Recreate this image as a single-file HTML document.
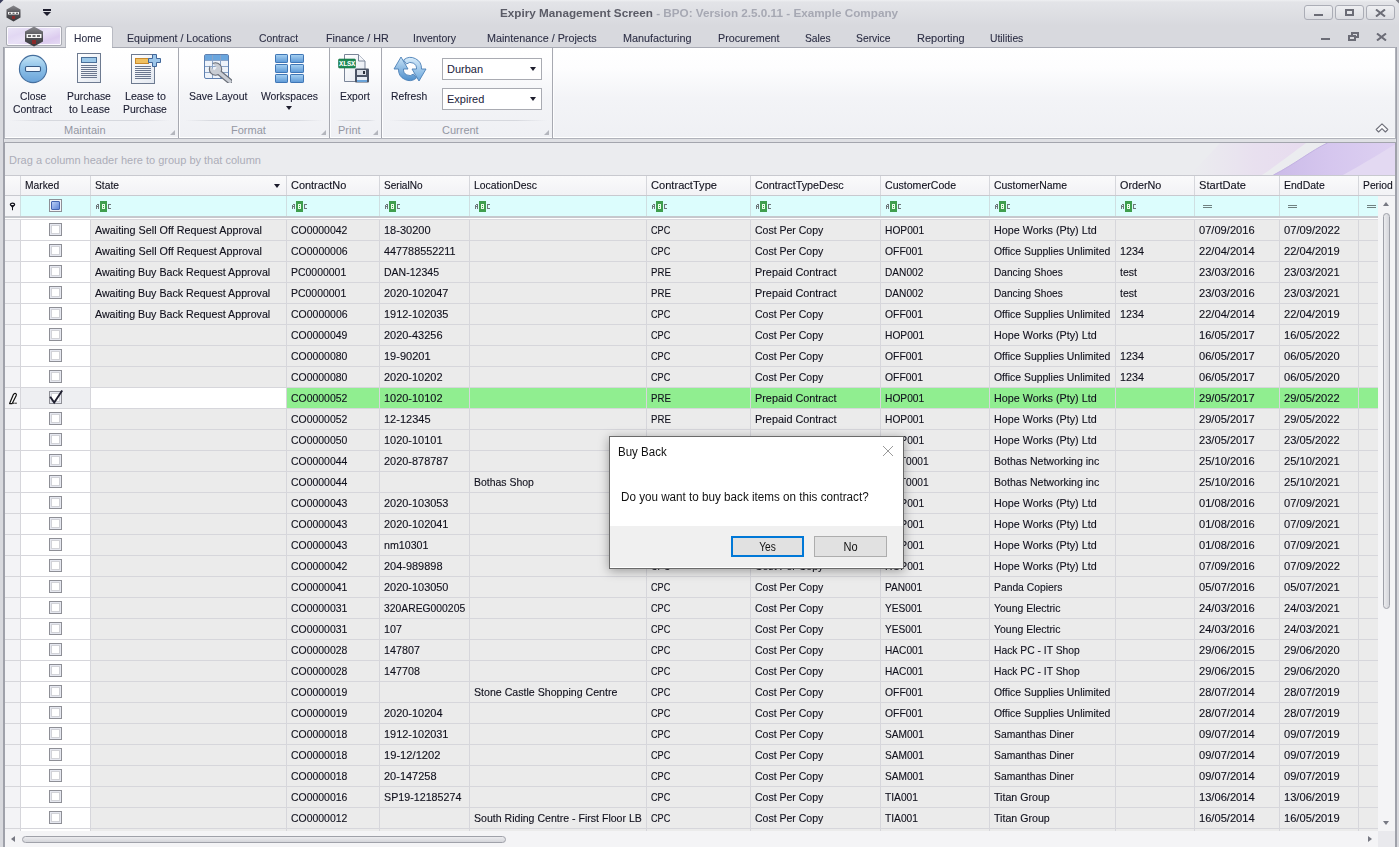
<!DOCTYPE html><html><head><meta charset="utf-8"><style>*{margin:0;padding:0;box-sizing:border-box}
html,body{width:1399px;height:847px;overflow:hidden}
body{position:relative;background:#d9dade;font-family:"Liberation Sans",sans-serif;font-size:11px;color:#1b1b2b}
div,svg{position:absolute;transform-origin:0 0}
.t{font:11px/13px "Liberation Sans",sans-serif;white-space:nowrap;color:#10101c;-webkit-text-stroke:0.12px #10101c}
.tab{font:11px/13px "Liberation Sans",sans-serif;white-space:nowrap;color:#2d2f45;-webkit-text-stroke:0.1px #2d2f45}
.rb{font:11px/13px "Liberation Sans",sans-serif;white-space:nowrap;color:#1a1c30;-webkit-text-stroke:0.1px #1a1c30}
.gl{font:11px/13px "Liberation Sans",sans-serif;white-space:nowrap;color:#9497a3}
.hdr{background:linear-gradient(#fafafb,#f2f2f5);border-top:1px solid #c8c9cf;border-bottom:1px solid #c8c9cf}
.vl{width:1px;background:#d6d7dc}
.vlf{width:1px;background:#cfdfe2}
.vlg{width:1px;background:#d6d6db}
.hl{height:1px;background:#d6d6db}
.flt{background:#dcfdfd}
.cb{width:13px;height:13px;border:1px solid #8e8f96;background:#fff;box-shadow:inset 0 0 0 1px #e6e8f0,inset 0 0 0 2px #d2d3d8}
.cbf{width:13px;height:13px;border:1px solid #8e8f96;background:#f3f4f8}
.cbf i{position:absolute;left:1px;top:1px;width:9px;height:9px;border:1px solid #4564b0;background:linear-gradient(135deg,#b9cdf5,#6186d8);border-radius:1px}
.abc{width:16px;height:11px}
.abc b{position:absolute;top:3px;width:3px;height:5px;font:bold 6px/5px "Liberation Mono",monospace;color:#6b7378}
.abc b:first-child{left:0}
.abc b:last-child{left:12px}
.abc em{position:absolute;left:4px;top:0;width:7px;height:11px;background:#3f9f4f;border-radius:1px;font:bold 6px/11px "Liberation Mono",monospace;color:#e8ffe8;text-align:center;font-style:normal}
.eq{width:9px;height:3px;border-top:1px solid #6f8080;border-bottom:1px solid #6f8080}
.sarrow{width:0;height:0;border-left:3.5px solid transparent;border-right:3.5px solid transparent;border-top:4px solid #1a1a2a}
.hl2{height:1px}
.wb{width:29px;height:15px;border:1px solid #abadb6;border-radius:3px;background:linear-gradient(#eeeff2,#dcdde2)}
.crn{width:0;height:0;border-left:5px solid transparent;border-bottom:5px solid #b4b6bd}
.cmb{width:100px;height:22px;border:1px solid #a9abb2;background:#fff}
.cmb span{position:absolute;left:4px;top:4px;font:11px/13px "Liberation Sans";color:#20223a}
.cmb i{position:absolute;left:87px;top:8px;width:0;height:0;border-left:3.5px solid transparent;border-right:3.5px solid transparent;border-top:4px solid #1e1e2e}
.pencil{width:8px;height:12px}
.chk{}
</style></head><body>
<!-- window frame -->
<div style="left:0;top:0;width:1399px;height:847px;background:linear-gradient(#eeeff2 0px,#e3e4e8 2px,#d8d9de 26px,#d8d9de 100%)"></div>
<div style="left:3px;top:47px;width:2px;height:800px;background:#9fa1aa"></div>
<div style="left:1395px;top:47px;width:2px;height:800px;background:#9fa1aa"></div>
<svg style="left:0;top:0" width="4" height="4"><path d="M0 0 L3.5 0 L0 3.5Z" fill="#3a3d5c"/></svg>
<svg style="left:1395px;top:0" width="4" height="4"><path d="M4 0 L0.5 0 L4 3.5Z" fill="#7c7e86"/></svg>
<!-- title bar -->
<svg style="left:6px;top:5px" width="15" height="17" viewBox="0 0 15 17"><path d="M7.5 0.5 L14.5 4.5 L14.5 12.5 L7.5 16.5 L0.5 12.5 L0.5 4.5Z" fill="url(#hx)"/><rect x="2" y="7" width="11" height="2.5" fill="#f2f2f2"/><rect x="3" y="7.7" width="2" height="1.1" fill="#4a4a4e"/><rect x="6.5" y="7.7" width="2" height="1.1" fill="#4a4a4e"/><rect x="10" y="7.7" width="2" height="1.1" fill="#4a4a4e"/><rect x="6" y="11" width="3" height="3" fill="#8a2a2a"/></svg>
<div style="left:43px;top:9px;width:8px;height:2px;background:#1e1e2e"></div>
<div style="left:43px;top:12px;width:0;height:0;border-left:4px solid transparent;border-right:4px solid transparent;border-top:4px solid #1e1e2e"></div>
<div style="left:500px;top:7px;font:bold 11px/13px 'Liberation Sans';white-space:nowrap;color:#5a5b66;transform:scaleX(1.064)">Expiry Management Screen <span style="color:#a6a8b3">- BPO: Version 2.5.0.11 - Example Company</span></div>
<!-- window buttons -->
<div class="wb" style="left:1304px;top:5px"></div>
<div class="wb" style="left:1335px;top:5px"></div>
<div class="wb" style="left:1366px;top:5px"></div>
<div style="left:1314px;top:14px;width:9px;height:2px;background:#6b6c76"></div>
<div style="left:1345px;top:9px;width:9px;height:7px;border:2px solid #6b6c76;border-width:2px 2px 2px 2px"></div>
<svg style="left:1375px;top:9px" width="11" height="8"><path d="M1 0.5 L10 7.5 M10 0.5 L1 7.5" stroke="#6b6c76" stroke-width="2"/></svg>
<!-- tabs row -->
<div style="left:6px;top:26px;width:56px;height:20px;border:1px solid #a9abb3;border-radius:2px;box-shadow:inset 0 0 0 1px rgba(255,255,255,0.85);background:linear-gradient(160deg,#ebe6f7 0%,#e2d8f3 30%,#e9e1f6 50%,#dccbef 75%,#e6dcf4 100%)"></div>
<svg style="left:24px;top:26px" width="20" height="21" viewBox="0 0 20 21"><defs><linearGradient id="hx" x1="0" y1="0" x2="0" y2="1"><stop offset="0" stop-color="#8a8a8f"/><stop offset="0.5" stop-color="#505055"/><stop offset="1" stop-color="#3a3a3e"/></linearGradient></defs><path d="M10 0.5 L19 5.5 L19 15.5 L10 20.5 L1 15.5 L1 5.5Z" fill="url(#hx)"/><rect x="2.5" y="8" width="15" height="4" fill="#f4f4f4"/><rect x="4" y="9.2" width="3" height="1.6" fill="#4a4a4e"/><rect x="8.5" y="9.2" width="3" height="1.6" fill="#4a4a4e"/><rect x="13" y="9.2" width="3" height="1.6" fill="#4a4a4e"/><rect x="8" y="14" width="4" height="4" fill="#8a2a2a"/></svg>
<div style="left:65px;top:26px;width:48px;height:23px;background:#fff;border:1px solid #b9bbc3;border-bottom:none;border-radius:3px 3px 0 0"></div>
<!-- mdi buttons -->
<div style="left:1321px;top:38px;width:9px;height:2px;background:#6b6c76"></div>
<div style="left:1351px;top:32px;width:8px;height:6px;border:2px solid #6b6c76"></div>
<div style="left:1348px;top:35px;width:8px;height:6px;border:2px solid #6b6c76;background:#d9dade"></div>
<svg style="left:1376px;top:33px" width="11" height="8"><path d="M1 0.5 L10 7.5 M10 0.5 L1 7.5" stroke="#6b6c76" stroke-width="2"/></svg>
<!-- ribbon panel -->
<div style="left:4px;top:47px;width:1392px;height:92px;border:1px solid #b0b2ba;border-top-color:#a9abb4;box-shadow:inset 0 -1px 0 #fff;background:linear-gradient(#ffffff 0px,#fdfdfe 20px,#f3f4f7 50px,#eff0f4 90px)"></div>
<div style="left:66px;top:47px;width:46px;height:1px;background:#fff"></div>
<div style="left:178px;top:48px;width:1px;height:90px;background:#a7a9b1"></div>
<div style="left:179px;top:48px;width:1px;height:90px;background:#fdfdfe"></div>
<div style="left:329px;top:48px;width:1px;height:90px;background:#a7a9b1"></div>
<div style="left:330px;top:48px;width:1px;height:90px;background:#fdfdfe"></div>
<div style="left:381px;top:48px;width:1px;height:90px;background:#a7a9b1"></div>
<div style="left:382px;top:48px;width:1px;height:90px;background:#fdfdfe"></div>
<div style="left:552px;top:48px;width:1px;height:90px;background:#a7a9b1"></div>
<div style="left:553px;top:48px;width:1px;height:90px;background:#fdfdfe"></div>
<div style="left:10px;top:120px;width:160px;height:1px;background:linear-gradient(90deg,rgba(210,212,218,0),#d6d8de 20%,#d6d8de 80%,rgba(210,212,218,0))"></div>
<div style="left:185px;top:120px;width:138px;height:1px;background:linear-gradient(90deg,rgba(210,212,218,0),#d6d8de 20%,#d6d8de 80%,rgba(210,212,218,0))"></div>
<div style="left:336px;top:120px;width:40px;height:1px;background:linear-gradient(90deg,rgba(210,212,218,0),#d6d8de 20%,#d6d8de 80%,rgba(210,212,218,0))"></div>
<div style="left:389px;top:120px;width:158px;height:1px;background:linear-gradient(90deg,rgba(210,212,218,0),#d6d8de 20%,#d6d8de 80%,rgba(210,212,218,0))"></div>
<div class="gl" style="left:64px;top:124px">Maintain</div>
<div class="gl" style="left:231px;top:124px">Format</div>
<div class="gl" style="left:338px;top:124px">Print</div>
<div class="gl" style="left:442px;top:124px">Current</div>
<div class="crn" style="left:170px;top:130px"></div>
<div class="crn" style="left:321px;top:130px"></div>
<div class="crn" style="left:373px;top:130px"></div>
<div class="crn" style="left:544px;top:130px"></div>
<!-- ribbon buttons text -->
<div style="left:286px;top:106px;width:0;height:0;border-left:3.5px solid transparent;border-right:3.5px solid transparent;border-top:4px solid #1e1e2e"></div>
<!-- combos -->
<div class="cmb" style="left:442px;top:58px"><span>Durban</span><i></i></div>
<div class="cmb" style="left:442px;top:88px"><span>Expired</span><i></i></div>
<!-- icons -->
<svg style="left:17px;top:53px" width="32" height="32" viewBox="0 0 32 32">
<defs><linearGradient id="gc" x1="0" y1="0" x2="0" y2="1"><stop offset="0" stop-color="#c6e6f7"/><stop offset="0.45" stop-color="#8fc2e8"/><stop offset="1" stop-color="#6aa3d9"/></linearGradient></defs>
<circle cx="16" cy="16" r="13.6" fill="url(#gc)" stroke="#456f9e" stroke-width="1.1"/>
<rect x="8.5" y="13.5" width="15" height="5" rx="1.2" fill="#f4f8fd" stroke="#375a85" stroke-width="1.1"/>
</svg>
<svg style="left:76px;top:52px" width="26" height="32" viewBox="0 0 26 32">
<defs><linearGradient id="gd" x1="0" y1="0" x2="1" y2="1"><stop offset="0" stop-color="#ffffff"/><stop offset="1" stop-color="#e3e8f0"/></linearGradient></defs>
<rect x="1.5" y="1.5" width="23" height="29" fill="url(#gd)" stroke="#6d7a90" stroke-width="1"/>
<rect x="5.5" y="5.5" width="15" height="5" fill="#9cc8e8" stroke="#4a6f98" stroke-width="1"/>
<path d="M5 13.5h16M5 15.5h16M5 17.5h16M5 19.5h16M5 21.5h16M5 23.5h16M5 25.5h16" stroke="#6a768e" stroke-width="1"/>
</svg>
<svg style="left:130px;top:53px" width="32" height="32" viewBox="0 0 32 32">
<rect x="1.5" y="1.5" width="23" height="29" fill="url(#gd)" stroke="#6d7a90" stroke-width="1"/>
<rect x="5.5" y="5.5" width="13" height="5" fill="#f0c060" stroke="#c98a2c" stroke-width="1"/>
<path d="M5 13.5h16M5 15.5h16M5 17.5h16M5 19.5h16M5 21.5h16M5 23.5h16M5 25.5h16" stroke="#6a768e" stroke-width="1"/>
<path d="M22.5 1.5h4v4h4v4h-4v4h-4v-4h-4v-4h4z" fill="#9cc6ea" stroke="#41679a" stroke-width="1"/>
</svg>
<svg style="left:203px;top:53px" width="32" height="32" viewBox="0 0 32 32">
<rect x="1.5" y="1.5" width="24" height="24" rx="1.5" fill="#eef3fa" stroke="#5f80b0" stroke-width="1"/>
<rect x="2" y="2" width="23" height="5" fill="#6aa6de"/>
<path d="M2 7.5h23M2 13.5h23M2 19.5h23M9.5 2v23M17.5 2v23" stroke="#8aa4c8" stroke-width="1"/>
<mask id="wm"><rect x="0" y="0" width="32" height="32" fill="#fff"/><rect x="10.7" y="6" width="3.6" height="10" fill="#000" transform="rotate(-45 12.5 16)"/></mask>
<g mask="url(#wm)">
<path d="M13 17 L27 28.5" stroke="#6a6f79" stroke-width="5.6" stroke-linecap="round"/>
<circle cx="12.5" cy="16" r="6.2" fill="#c9cdd4" stroke="#6a6f79" stroke-width="1.1"/>
<path d="M13 17 L27 28.5" stroke="#c9cdd4" stroke-width="3.4" stroke-linecap="round"/>
</g>
</svg>
<svg style="left:274px;top:53px" width="32" height="32" viewBox="0 0 32 32">
<defs><linearGradient id="gw" x1="0" y1="0" x2="0" y2="1"><stop offset="0" stop-color="#a9d2f2"/><stop offset="1" stop-color="#5c98d6"/></linearGradient></defs>
<g fill="url(#gw)" stroke="#3f76b6" stroke-width="1">
<rect x="1.5" y="1.5" width="12" height="8" rx="0.6"/><rect x="16.5" y="1.5" width="13" height="8" rx="0.6"/>
<rect x="1.5" y="11.5" width="12" height="8" rx="0.6"/><rect x="16.5" y="11.5" width="13" height="8" rx="0.6"/>
<rect x="1.5" y="21.5" width="12" height="8" rx="0.6"/><rect x="16.5" y="21.5" width="13" height="8" rx="0.6"/>
</g></svg>
<svg style="left:337px;top:52px" width="34" height="32" viewBox="0 0 34 32">
<path d="M7.5 2.5h14l6.5 6.5v20.5h-20.5z" fill="url(#gd)" stroke="#7a8598" stroke-width="1"/>
<path d="M21.5 2.5v6.5h6.5" fill="#f4f6f9" stroke="#7a8598" stroke-width="1"/>
<rect x="1.5" y="7" width="17" height="9" rx="1" fill="#1f8a55" stroke="#157044" stroke-width="0.6"/>
<text x="10" y="14.2" font-family="Liberation Mono" font-weight="bold" font-size="7.2" fill="#ffffff" text-anchor="middle" letter-spacing="-0.3">XLSX</text>
<rect x="18" y="16.5" width="14" height="14" rx="1" fill="#4b5466"/>
<rect x="20" y="18" width="9" height="5" fill="#d9dee6"/>
<rect x="26" y="19" width="2" height="3" fill="#2a303c"/>
<rect x="20" y="25" width="10" height="5" fill="#e7edf5"/>
<rect x="20" y="28" width="10" height="2" fill="#6aa3d8"/>
</svg>
<svg style="left:392px;top:55px" width="36" height="28" viewBox="0 0 36 28">
<defs><linearGradient id="gr" x1="0" y1="0" x2="0" y2="1"><stop offset="0" stop-color="#c9e4f7"/><stop offset="1" stop-color="#4f8fcc"/></linearGradient>
<linearGradient id="gr2" x1="0" y1="0" x2="0" y2="1"><stop offset="0" stop-color="#d8ecfa"/><stop offset="1" stop-color="#6aa6dc"/></linearGradient></defs>
<path d="M9 2 L2 14 h4.5 a11 11 0 0 0 18 9 l-3 -4 a6 6 0 0 1 -10 -5 h4.5z" fill="url(#gr)" stroke="#4b7fb5" stroke-width="0.9"/>
<path d="M27 26 L34 14 h-4.5 a11 11 0 0 0 -18 -9 l3 4 a6 6 0 0 1 10 5 h-4.5z" fill="url(#gr2)" stroke="#4b7fb5" stroke-width="0.9"/>
</svg>


<svg style="left:1375px;top:123px" width="15" height="11" viewBox="0 0 15 11"><path d="M1.2 6.5 L7 0.8 L12.8 6.5 L10.4 9 L7 5.7 L3.6 9Z" fill="#fbfbfd" stroke="#6f707a" stroke-width="1.1" stroke-linejoin="round"/></svg>
<!-- band + group panel -->
<div style="left:4px;top:139px;width:1392px;height:3px;background:#dfe0e4"></div>
<div style="left:4px;top:142px;width:1392px;height:1px;background:#a3a5ad"></div>
<div style="left:5px;top:143px;width:1390px;height:32px;background:#ebecef"></div>

<svg style="left:1150px;top:143px" width="245" height="32" viewBox="0 0 245 32">
<defs>
<linearGradient id="pk" x1="0" y1="0" x2="1" y2="0"><stop offset="0" stop-color="#e7dcef" stop-opacity="0"/><stop offset="0.55" stop-color="#e6d6ef" stop-opacity="0.9"/><stop offset="1" stop-color="#e4d0ee"/></linearGradient>
<linearGradient id="pu" x1="0" y1="0" x2="1" y2="0"><stop offset="0" stop-color="#cbbbe8"/><stop offset="0.45" stop-color="#d5c6ee"/><stop offset="1" stop-color="#ddd0f1"/></linearGradient>
</defs>
<path d="M40 32 L112 32 C130 20 145 8 156 0 L70 0Z" fill="url(#pk)" opacity="0.6"/>
<path d="M123 32 C145 21 162 7 177 0 L245 0 L245 32Z" fill="url(#pu)"/>
<path d="M123.5 32 C145 21 162 7 177.5 0" fill="none" stroke="#c3b2e2" stroke-width="1"/>
<path d="M193 32 C215 20 232 9 244 2 L245 2 L245 32Z" fill="#e3d9f2"/>
</svg>
<div style="left:9px;top:154px;font:11px/13px 'Liberation Sans';color:#abadb8;white-space:nowrap">Drag a column header here to group by that column</div>

<div class="tab" style="left:74px;top:32px;transform:scaleX(0.935);">Home</div>
<div class="tab" style="left:127px;top:32px;transform:scaleX(0.960);">Equipment / Locations</div>
<div class="tab" style="left:259px;top:32px;transform:scaleX(0.941);">Contract</div>
<div class="tab" style="left:326px;top:32px;transform:scaleX(0.976);">Finance / HR</div>
<div class="tab" style="left:413px;top:32px;transform:scaleX(0.951);">Inventory</div>
<div class="tab" style="left:487px;top:32px;transform:scaleX(0.979);">Maintenance / Projects</div>
<div class="tab" style="left:623px;top:32px;transform:scaleX(0.983);">Manufacturing</div>
<div class="tab" style="left:718px;top:32px;transform:scaleX(0.978);">Procurement</div>
<div class="tab" style="left:805px;top:32px;transform:scaleX(0.935);">Sales</div>
<div class="tab" style="left:856px;top:32px;transform:scaleX(0.940);">Service</div>
<div class="tab" style="left:917px;top:32px;transform:scaleX(0.998);">Reporting</div>
<div class="tab" style="left:990px;top:32px;transform:scaleX(0.939);">Utilities</div>
<div class="rb" style="left:19.9px;top:90px;transform:scaleX(0.934)">Close</div>
<div class="rb" style="left:13.4px;top:103px;transform:scaleX(0.941)">Contract</div>
<div class="rb" style="left:67.1px;top:90px;transform:scaleX(0.944)">Purchase</div>
<div class="rb" style="left:68.6px;top:103px;transform:scaleX(0.969)">to Lease</div>
<div class="rb" style="left:124.6px;top:90px;transform:scaleX(0.969)">Lease to</div>
<div class="rb" style="left:123.1px;top:103px;transform:scaleX(0.944)">Purchase</div>
<div class="rb" style="left:188.8px;top:90px;transform:scaleX(0.955)">Save Layout</div>
<div class="rb" style="left:261.0px;top:90px;transform:scaleX(0.943)">Workspaces</div>
<div class="rb" style="left:340.1px;top:90px;transform:scaleX(0.938)">Export</div>
<div class="rb" style="left:391.4px;top:90px;transform:scaleX(0.940)">Refresh</div>
<div class="hdr" style="left:5px;top:175px;width:1390px;height:21px"></div>
<div class="vl" style="left:20px;top:176px;height:19px"></div>
<div class="t" style="left:25px;top:179px;transform:scaleX(0.933);">Marked</div>
<div class="vl" style="left:90px;top:176px;height:19px"></div>
<div class="t" style="left:95px;top:179px;transform:scaleX(0.934);">State</div>
<div class="vl" style="left:286px;top:176px;height:19px"></div>
<div class="t" style="left:291px;top:179px;transform:scaleX(0.993);">ContractNo</div>
<div class="vl" style="left:379px;top:176px;height:19px"></div>
<div class="t" style="left:384px;top:179px;transform:scaleX(0.913);">SerialNo</div>
<div class="vl" style="left:469px;top:176px;height:19px"></div>
<div class="t" style="left:474px;top:179px;transform:scaleX(0.944);">LocationDesc</div>
<div class="vl" style="left:646px;top:176px;height:19px"></div>
<div class="t" style="left:651px;top:179px;transform:scaleX(1.009);">ContractType</div>
<div class="vl" style="left:750px;top:176px;height:19px"></div>
<div class="t" style="left:755px;top:179px;transform:scaleX(0.980);">ContractTypeDesc</div>
<div class="vl" style="left:880px;top:176px;height:19px"></div>
<div class="t" style="left:885px;top:179px;transform:scaleX(0.960);">CustomerCode</div>
<div class="vl" style="left:989px;top:176px;height:19px"></div>
<div class="t" style="left:994px;top:179px;transform:scaleX(0.947);">CustomerName</div>
<div class="vl" style="left:1115px;top:176px;height:19px"></div>
<div class="t" style="left:1120px;top:179px;transform:scaleX(0.980);">OrderNo</div>
<div class="vl" style="left:1194px;top:176px;height:19px"></div>
<div class="t" style="left:1199px;top:179px;transform:scaleX(1.010);">StartDate</div>
<div class="vl" style="left:1279px;top:176px;height:19px"></div>
<div class="t" style="left:1284px;top:179px;transform:scaleX(0.953);">EndDate</div>
<div class="vl" style="left:1358px;top:176px;height:19px"></div>
<div class="t" style="left:1363px;top:179px;transform:scaleX(0.938);">Period</div>
<div class="sarrow" style="left:274px;top:184px"></div>
<div style="left:5px;top:196px;width:15px;height:20px;background:#f3f4f7"></div>
<div class="flt" style="left:21px;top:196px;width:1357px;height:20px"></div>
<svg style="left:9px;top:202px" width="7" height="9" viewBox="0 0 7 9"><ellipse cx="3.5" cy="2.5" rx="2.1" ry="1.3" fill="#fff" stroke="#10101a" stroke-width="1.3"/><path d="M1.6 3.6 L5.4 3.6 L4 5.5 L4 8.2 L3 8.2 L3 5.5Z" fill="#10101a"/></svg>
<div class="vlf" style="left:20px;top:196px;height:20px"></div>
<div class="vlf" style="left:90px;top:196px;height:20px"></div>
<div class="vlf" style="left:286px;top:196px;height:20px"></div>
<div class="vlf" style="left:379px;top:196px;height:20px"></div>
<div class="vlf" style="left:469px;top:196px;height:20px"></div>
<div class="vlf" style="left:646px;top:196px;height:20px"></div>
<div class="vlf" style="left:750px;top:196px;height:20px"></div>
<div class="vlf" style="left:880px;top:196px;height:20px"></div>
<div class="vlf" style="left:989px;top:196px;height:20px"></div>
<div class="vlf" style="left:1115px;top:196px;height:20px"></div>
<div class="vlf" style="left:1194px;top:196px;height:20px"></div>
<div class="vlf" style="left:1279px;top:196px;height:20px"></div>
<div class="vlf" style="left:1358px;top:196px;height:20px"></div>
<div class="cbf" style="left:49px;top:199px"><i></i></div>
<svg style="left:96px;top:201px" width="15" height="11" shape-rendering="crispEdges"><g fill="#6d7579"><rect x="0" y="4" width="1" height="4"/><rect x="2" y="4" width="1" height="4"/><rect x="0.5" y="3" width="2" height="1"/><rect x="1" y="5" width="1" height="1"/><rect x="12" y="3" width="3" height="1"/><rect x="12" y="7" width="3" height="1"/><rect x="12" y="4" width="1" height="3"/></g><rect x="4" y="0" width="7" height="11" rx="1" fill="#3f9e4e"/><rect x="6" y="3" width="3" height="5" fill="#e9fbe9"/><rect x="7" y="4" width="1" height="1" fill="#3f9e4e"/><rect x="7" y="6" width="1" height="1" fill="#3f9e4e"/></svg>
<svg style="left:292px;top:201px" width="15" height="11" shape-rendering="crispEdges"><g fill="#6d7579"><rect x="0" y="4" width="1" height="4"/><rect x="2" y="4" width="1" height="4"/><rect x="0.5" y="3" width="2" height="1"/><rect x="1" y="5" width="1" height="1"/><rect x="12" y="3" width="3" height="1"/><rect x="12" y="7" width="3" height="1"/><rect x="12" y="4" width="1" height="3"/></g><rect x="4" y="0" width="7" height="11" rx="1" fill="#3f9e4e"/><rect x="6" y="3" width="3" height="5" fill="#e9fbe9"/><rect x="7" y="4" width="1" height="1" fill="#3f9e4e"/><rect x="7" y="6" width="1" height="1" fill="#3f9e4e"/></svg>
<svg style="left:385px;top:201px" width="15" height="11" shape-rendering="crispEdges"><g fill="#6d7579"><rect x="0" y="4" width="1" height="4"/><rect x="2" y="4" width="1" height="4"/><rect x="0.5" y="3" width="2" height="1"/><rect x="1" y="5" width="1" height="1"/><rect x="12" y="3" width="3" height="1"/><rect x="12" y="7" width="3" height="1"/><rect x="12" y="4" width="1" height="3"/></g><rect x="4" y="0" width="7" height="11" rx="1" fill="#3f9e4e"/><rect x="6" y="3" width="3" height="5" fill="#e9fbe9"/><rect x="7" y="4" width="1" height="1" fill="#3f9e4e"/><rect x="7" y="6" width="1" height="1" fill="#3f9e4e"/></svg>
<svg style="left:475px;top:201px" width="15" height="11" shape-rendering="crispEdges"><g fill="#6d7579"><rect x="0" y="4" width="1" height="4"/><rect x="2" y="4" width="1" height="4"/><rect x="0.5" y="3" width="2" height="1"/><rect x="1" y="5" width="1" height="1"/><rect x="12" y="3" width="3" height="1"/><rect x="12" y="7" width="3" height="1"/><rect x="12" y="4" width="1" height="3"/></g><rect x="4" y="0" width="7" height="11" rx="1" fill="#3f9e4e"/><rect x="6" y="3" width="3" height="5" fill="#e9fbe9"/><rect x="7" y="4" width="1" height="1" fill="#3f9e4e"/><rect x="7" y="6" width="1" height="1" fill="#3f9e4e"/></svg>
<svg style="left:652px;top:201px" width="15" height="11" shape-rendering="crispEdges"><g fill="#6d7579"><rect x="0" y="4" width="1" height="4"/><rect x="2" y="4" width="1" height="4"/><rect x="0.5" y="3" width="2" height="1"/><rect x="1" y="5" width="1" height="1"/><rect x="12" y="3" width="3" height="1"/><rect x="12" y="7" width="3" height="1"/><rect x="12" y="4" width="1" height="3"/></g><rect x="4" y="0" width="7" height="11" rx="1" fill="#3f9e4e"/><rect x="6" y="3" width="3" height="5" fill="#e9fbe9"/><rect x="7" y="4" width="1" height="1" fill="#3f9e4e"/><rect x="7" y="6" width="1" height="1" fill="#3f9e4e"/></svg>
<svg style="left:756px;top:201px" width="15" height="11" shape-rendering="crispEdges"><g fill="#6d7579"><rect x="0" y="4" width="1" height="4"/><rect x="2" y="4" width="1" height="4"/><rect x="0.5" y="3" width="2" height="1"/><rect x="1" y="5" width="1" height="1"/><rect x="12" y="3" width="3" height="1"/><rect x="12" y="7" width="3" height="1"/><rect x="12" y="4" width="1" height="3"/></g><rect x="4" y="0" width="7" height="11" rx="1" fill="#3f9e4e"/><rect x="6" y="3" width="3" height="5" fill="#e9fbe9"/><rect x="7" y="4" width="1" height="1" fill="#3f9e4e"/><rect x="7" y="6" width="1" height="1" fill="#3f9e4e"/></svg>
<svg style="left:886px;top:201px" width="15" height="11" shape-rendering="crispEdges"><g fill="#6d7579"><rect x="0" y="4" width="1" height="4"/><rect x="2" y="4" width="1" height="4"/><rect x="0.5" y="3" width="2" height="1"/><rect x="1" y="5" width="1" height="1"/><rect x="12" y="3" width="3" height="1"/><rect x="12" y="7" width="3" height="1"/><rect x="12" y="4" width="1" height="3"/></g><rect x="4" y="0" width="7" height="11" rx="1" fill="#3f9e4e"/><rect x="6" y="3" width="3" height="5" fill="#e9fbe9"/><rect x="7" y="4" width="1" height="1" fill="#3f9e4e"/><rect x="7" y="6" width="1" height="1" fill="#3f9e4e"/></svg>
<svg style="left:995px;top:201px" width="15" height="11" shape-rendering="crispEdges"><g fill="#6d7579"><rect x="0" y="4" width="1" height="4"/><rect x="2" y="4" width="1" height="4"/><rect x="0.5" y="3" width="2" height="1"/><rect x="1" y="5" width="1" height="1"/><rect x="12" y="3" width="3" height="1"/><rect x="12" y="7" width="3" height="1"/><rect x="12" y="4" width="1" height="3"/></g><rect x="4" y="0" width="7" height="11" rx="1" fill="#3f9e4e"/><rect x="6" y="3" width="3" height="5" fill="#e9fbe9"/><rect x="7" y="4" width="1" height="1" fill="#3f9e4e"/><rect x="7" y="6" width="1" height="1" fill="#3f9e4e"/></svg>
<svg style="left:1121px;top:201px" width="15" height="11" shape-rendering="crispEdges"><g fill="#6d7579"><rect x="0" y="4" width="1" height="4"/><rect x="2" y="4" width="1" height="4"/><rect x="0.5" y="3" width="2" height="1"/><rect x="1" y="5" width="1" height="1"/><rect x="12" y="3" width="3" height="1"/><rect x="12" y="7" width="3" height="1"/><rect x="12" y="4" width="1" height="3"/></g><rect x="4" y="0" width="7" height="11" rx="1" fill="#3f9e4e"/><rect x="6" y="3" width="3" height="5" fill="#e9fbe9"/><rect x="7" y="4" width="1" height="1" fill="#3f9e4e"/><rect x="7" y="6" width="1" height="1" fill="#3f9e4e"/></svg>
<div class="eq" style="left:1203px;top:205px"></div>
<div class="eq" style="left:1288px;top:205px"></div>
<div class="eq" style="left:1367px;top:205px"></div>
<div style="position:absolute;left:5px;top:216px;width:1373px;height:2px;background:#c6c8cd"></div>
<div style="position:absolute;left:5px;top:218px;width:1373px;height:1px;background:#fff"></div>
<div style="position:absolute;left:5px;top:219px;width:1373px;height:1px;background:#d9d9de"></div>
<div style="position:absolute;left:5px;top:220px;width:15px;height:611px;background:#f3f3f6"></div>
<div style="position:absolute;left:21px;top:220px;width:69px;height:611px;background:#fff"></div>
<div style="position:absolute;left:91px;top:220px;width:1287px;height:611px;background:#ebebeb"></div>
<div class="cb" style="left:49px;top:223px"></div>
<div class="hl" style="left:5px;top:240px;width:1373px"></div>
<div class="t" style="left:95px;top:224px;transform:scaleX(0.980);width:194.8px;overflow:hidden;">Awaiting Sell Off Request Approval</div>
<div class="t" style="left:291px;top:224px;transform:scaleX(0.949);width:92.7px;overflow:hidden;">CO0000042</div>
<div class="t" style="left:384px;top:224px;transform:scaleX(1.001);width:84.9px;overflow:hidden;">18-30200</div>
<div class="t" style="left:651px;top:224px;transform:scaleX(0.829);width:119.4px;overflow:hidden;">CPC</div>
<div class="t" style="left:755px;top:224px;transform:scaleX(0.955);width:130.9px;overflow:hidden;">Cost Per Copy</div>
<div class="t" style="left:885px;top:224px;transform:scaleX(0.929);width:111.9px;overflow:hidden;">HOP001</div>
<div class="t" style="left:994px;top:224px;transform:scaleX(0.978);width:123.7px;overflow:hidden;">Hope Works (Pty) Ltd</div>
<div class="t" style="left:1199px;top:224px;transform:scaleX(1.010);width:79.2px;overflow:hidden;">07/09/2016</div>
<div class="t" style="left:1284px;top:224px;transform:scaleX(1.016);width:72.9px;overflow:hidden;">07/09/2022</div>
<div class="cb" style="left:49px;top:244px"></div>
<div class="hl" style="left:5px;top:261px;width:1373px"></div>
<div class="t" style="left:95px;top:245px;transform:scaleX(0.980);width:194.8px;overflow:hidden;">Awaiting Sell Off Request Approval</div>
<div class="t" style="left:291px;top:245px;transform:scaleX(0.953);width:92.4px;overflow:hidden;">CO0000006</div>
<div class="t" style="left:384px;top:245px;transform:scaleX(0.985);width:86.3px;overflow:hidden;">447788552211</div>
<div class="t" style="left:651px;top:245px;transform:scaleX(0.829);width:119.4px;overflow:hidden;">CPC</div>
<div class="t" style="left:755px;top:245px;transform:scaleX(0.955);width:130.9px;overflow:hidden;">Cost Per Copy</div>
<div class="t" style="left:885px;top:245px;transform:scaleX(0.942);width:110.4px;overflow:hidden;">OFF001</div>
<div class="t" style="left:994px;top:245px;transform:scaleX(0.948);width:127.6px;overflow:hidden;">Office Supplies Unlimited</div>
<div class="t" style="left:1120px;top:245px;transform:scaleX(0.977);width:75.7px;overflow:hidden;">1234</div>
<div class="t" style="left:1199px;top:245px;transform:scaleX(1.011);width:79.1px;overflow:hidden;">22/04/2014</div>
<div class="t" style="left:1284px;top:245px;transform:scaleX(1.011);width:73.2px;overflow:hidden;">22/04/2019</div>
<div class="cb" style="left:49px;top:265px"></div>
<div class="hl" style="left:5px;top:282px;width:1373px"></div>
<div class="t" style="left:95px;top:266px;transform:scaleX(0.969);width:197.0px;overflow:hidden;">Awaiting Buy Back Request Approval</div>
<div class="t" style="left:291px;top:266px;transform:scaleX(0.951);width:92.5px;overflow:hidden;">PC0000001</div>
<div class="t" style="left:384px;top:266px;transform:scaleX(0.957);width:88.8px;overflow:hidden;">DAN-12345</div>
<div class="t" style="left:651px;top:266px;transform:scaleX(0.878);width:112.8px;overflow:hidden;">PRE</div>
<div class="t" style="left:755px;top:266px;transform:scaleX(0.987);width:126.7px;overflow:hidden;">Prepaid Contract</div>
<div class="t" style="left:885px;top:266px;transform:scaleX(0.922);width:112.8px;overflow:hidden;">DAN002</div>
<div class="t" style="left:994px;top:266px;transform:scaleX(0.921);width:131.3px;overflow:hidden;">Dancing Shoes</div>
<div class="t" style="left:1120px;top:266px;transform:scaleX(0.956);width:77.4px;overflow:hidden;">test</div>
<div class="t" style="left:1199px;top:266px;transform:scaleX(1.011);width:79.1px;overflow:hidden;">23/03/2016</div>
<div class="t" style="left:1284px;top:266px;transform:scaleX(1.011);width:73.2px;overflow:hidden;">23/03/2021</div>
<div class="cb" style="left:49px;top:286px"></div>
<div class="hl" style="left:5px;top:303px;width:1373px"></div>
<div class="t" style="left:95px;top:287px;transform:scaleX(0.969);width:197.0px;overflow:hidden;">Awaiting Buy Back Request Approval</div>
<div class="t" style="left:291px;top:287px;transform:scaleX(0.951);width:92.5px;overflow:hidden;">PC0000001</div>
<div class="t" style="left:384px;top:287px;transform:scaleX(0.994);width:85.5px;overflow:hidden;">2020-102047</div>
<div class="t" style="left:651px;top:287px;transform:scaleX(0.878);width:112.8px;overflow:hidden;">PRE</div>
<div class="t" style="left:755px;top:287px;transform:scaleX(0.987);width:126.7px;overflow:hidden;">Prepaid Contract</div>
<div class="t" style="left:885px;top:287px;transform:scaleX(0.922);width:112.8px;overflow:hidden;">DAN002</div>
<div class="t" style="left:994px;top:287px;transform:scaleX(0.921);width:131.3px;overflow:hidden;">Dancing Shoes</div>
<div class="t" style="left:1120px;top:287px;transform:scaleX(0.956);width:77.4px;overflow:hidden;">test</div>
<div class="t" style="left:1199px;top:287px;transform:scaleX(1.011);width:79.1px;overflow:hidden;">23/03/2016</div>
<div class="t" style="left:1284px;top:287px;transform:scaleX(1.011);width:73.2px;overflow:hidden;">23/03/2021</div>
<div class="cb" style="left:49px;top:307px"></div>
<div class="hl" style="left:5px;top:324px;width:1373px"></div>
<div class="t" style="left:95px;top:308px;transform:scaleX(0.969);width:197.0px;overflow:hidden;">Awaiting Buy Back Request Approval</div>
<div class="t" style="left:291px;top:308px;transform:scaleX(0.953);width:92.4px;overflow:hidden;">CO0000006</div>
<div class="t" style="left:384px;top:308px;transform:scaleX(0.994);width:85.5px;overflow:hidden;">1912-102035</div>
<div class="t" style="left:651px;top:308px;transform:scaleX(0.829);width:119.4px;overflow:hidden;">CPC</div>
<div class="t" style="left:755px;top:308px;transform:scaleX(0.955);width:130.9px;overflow:hidden;">Cost Per Copy</div>
<div class="t" style="left:885px;top:308px;transform:scaleX(0.942);width:110.4px;overflow:hidden;">OFF001</div>
<div class="t" style="left:994px;top:308px;transform:scaleX(0.948);width:127.6px;overflow:hidden;">Office Supplies Unlimited</div>
<div class="t" style="left:1120px;top:308px;transform:scaleX(0.977);width:75.7px;overflow:hidden;">1234</div>
<div class="t" style="left:1199px;top:308px;transform:scaleX(1.011);width:79.1px;overflow:hidden;">22/04/2014</div>
<div class="t" style="left:1284px;top:308px;transform:scaleX(1.011);width:73.2px;overflow:hidden;">22/04/2019</div>
<div class="cb" style="left:49px;top:328px"></div>
<div class="hl" style="left:5px;top:345px;width:1373px"></div>
<div class="t" style="left:291px;top:329px;transform:scaleX(0.949);width:92.7px;overflow:hidden;">CO0000049</div>
<div class="t" style="left:384px;top:329px;transform:scaleX(0.996);width:85.3px;overflow:hidden;">2020-43256</div>
<div class="t" style="left:651px;top:329px;transform:scaleX(0.829);width:119.4px;overflow:hidden;">CPC</div>
<div class="t" style="left:755px;top:329px;transform:scaleX(0.955);width:130.9px;overflow:hidden;">Cost Per Copy</div>
<div class="t" style="left:885px;top:329px;transform:scaleX(0.929);width:111.9px;overflow:hidden;">HOP001</div>
<div class="t" style="left:994px;top:329px;transform:scaleX(0.978);width:123.7px;overflow:hidden;">Hope Works (Pty) Ltd</div>
<div class="t" style="left:1199px;top:329px;transform:scaleX(1.011);width:79.1px;overflow:hidden;">16/05/2017</div>
<div class="t" style="left:1284px;top:329px;transform:scaleX(1.011);width:73.2px;overflow:hidden;">16/05/2022</div>
<div class="cb" style="left:49px;top:349px"></div>
<div class="hl" style="left:5px;top:366px;width:1373px"></div>
<div class="t" style="left:291px;top:350px;transform:scaleX(0.949);width:92.7px;overflow:hidden;">CO0000080</div>
<div class="t" style="left:384px;top:350px;transform:scaleX(1.001);width:84.9px;overflow:hidden;">19-90201</div>
<div class="t" style="left:651px;top:350px;transform:scaleX(0.829);width:119.4px;overflow:hidden;">CPC</div>
<div class="t" style="left:755px;top:350px;transform:scaleX(0.955);width:130.9px;overflow:hidden;">Cost Per Copy</div>
<div class="t" style="left:885px;top:350px;transform:scaleX(0.942);width:110.4px;overflow:hidden;">OFF001</div>
<div class="t" style="left:994px;top:350px;transform:scaleX(0.948);width:127.6px;overflow:hidden;">Office Supplies Unlimited</div>
<div class="t" style="left:1120px;top:350px;transform:scaleX(0.977);width:75.7px;overflow:hidden;">1234</div>
<div class="t" style="left:1199px;top:350px;transform:scaleX(1.011);width:79.1px;overflow:hidden;">06/05/2017</div>
<div class="t" style="left:1284px;top:350px;transform:scaleX(1.011);width:73.2px;overflow:hidden;">06/05/2020</div>
<div class="cb" style="left:49px;top:370px"></div>
<div class="hl" style="left:5px;top:387px;width:1373px"></div>
<div class="t" style="left:291px;top:371px;transform:scaleX(0.949);width:92.7px;overflow:hidden;">CO0000080</div>
<div class="t" style="left:384px;top:371px;transform:scaleX(0.996);width:85.3px;overflow:hidden;">2020-10202</div>
<div class="t" style="left:651px;top:371px;transform:scaleX(0.829);width:119.4px;overflow:hidden;">CPC</div>
<div class="t" style="left:755px;top:371px;transform:scaleX(0.955);width:130.9px;overflow:hidden;">Cost Per Copy</div>
<div class="t" style="left:885px;top:371px;transform:scaleX(0.942);width:110.4px;overflow:hidden;">OFF001</div>
<div class="t" style="left:994px;top:371px;transform:scaleX(0.948);width:127.6px;overflow:hidden;">Office Supplies Unlimited</div>
<div class="t" style="left:1120px;top:371px;transform:scaleX(0.977);width:75.7px;overflow:hidden;">1234</div>
<div class="t" style="left:1199px;top:371px;transform:scaleX(1.011);width:79.1px;overflow:hidden;">06/05/2017</div>
<div class="t" style="left:1284px;top:371px;transform:scaleX(1.011);width:73.2px;overflow:hidden;">06/05/2020</div>
<div style="position:absolute;left:21px;top:388px;width:69px;height:20px;background:#eeeff2"></div>
<div style="position:absolute;left:91px;top:388px;width:195px;height:20px;background:#fff"></div>
<div style="position:absolute;left:287px;top:388px;width:1091px;height:20px;background:#90ee90"></div>
<svg style="left:8px;top:392px" width="10" height="13" viewBox="0 0 10 13"><path d="M1.6 11.6 L5.4 2.6 Q6.4 0.9 7.7 1.5 Q8.9 2.2 8.1 3.8 L4.2 11.6 Z" fill="#fff" stroke="#111" stroke-width="1.2" stroke-linejoin="round"/><rect x="5.2" y="10.6" width="1.3" height="1.3" fill="#111"/><rect x="7.3" y="10.6" width="1.3" height="1.3" fill="#111"/></svg>
<div class="cb" style="left:49px;top:391px"></div>
<svg class="chk" style="left:48px;top:389px" width="16" height="16"><path d="M2.2 7.8 L6.2 13.5 L14.2 1.5" fill="none" stroke="#1f1f2f" stroke-width="1.9" stroke-linejoin="miter"/></svg>
<div class="hl" style="left:5px;top:408px;width:1373px"></div>
<div class="t" style="left:291px;top:392px;transform:scaleX(0.949);width:92.7px;overflow:hidden;">CO0000052</div>
<div class="t" style="left:384px;top:392px;transform:scaleX(0.996);width:85.3px;overflow:hidden;">1020-10102</div>
<div class="t" style="left:651px;top:392px;transform:scaleX(0.878);width:112.8px;overflow:hidden;">PRE</div>
<div class="t" style="left:755px;top:392px;transform:scaleX(0.987);width:126.7px;overflow:hidden;">Prepaid Contract</div>
<div class="t" style="left:885px;top:392px;transform:scaleX(0.929);width:111.9px;overflow:hidden;">HOP001</div>
<div class="t" style="left:994px;top:392px;transform:scaleX(0.978);width:123.7px;overflow:hidden;">Hope Works (Pty) Ltd</div>
<div class="t" style="left:1199px;top:392px;transform:scaleX(1.011);width:79.1px;overflow:hidden;">29/05/2017</div>
<div class="t" style="left:1284px;top:392px;transform:scaleX(1.011);width:73.2px;overflow:hidden;">29/05/2022</div>
<div class="cb" style="left:49px;top:412px"></div>
<div class="hl" style="left:5px;top:429px;width:1373px"></div>
<div class="t" style="left:291px;top:413px;transform:scaleX(0.949);width:92.7px;overflow:hidden;">CO0000052</div>
<div class="t" style="left:384px;top:413px;transform:scaleX(1.001);width:84.9px;overflow:hidden;">12-12345</div>
<div class="t" style="left:651px;top:413px;transform:scaleX(0.878);width:112.8px;overflow:hidden;">PRE</div>
<div class="t" style="left:755px;top:413px;transform:scaleX(0.987);width:126.7px;overflow:hidden;">Prepaid Contract</div>
<div class="t" style="left:885px;top:413px;transform:scaleX(0.929);width:111.9px;overflow:hidden;">HOP001</div>
<div class="t" style="left:994px;top:413px;transform:scaleX(0.978);width:123.7px;overflow:hidden;">Hope Works (Pty) Ltd</div>
<div class="t" style="left:1199px;top:413px;transform:scaleX(1.011);width:79.1px;overflow:hidden;">29/05/2017</div>
<div class="t" style="left:1284px;top:413px;transform:scaleX(1.011);width:73.2px;overflow:hidden;">29/05/2022</div>
<div class="cb" style="left:49px;top:433px"></div>
<div class="hl" style="left:5px;top:450px;width:1373px"></div>
<div class="t" style="left:291px;top:434px;transform:scaleX(0.949);width:92.7px;overflow:hidden;">CO0000050</div>
<div class="t" style="left:384px;top:434px;transform:scaleX(0.996);width:85.3px;overflow:hidden;">1020-10101</div>
<div class="t" style="left:651px;top:434px;transform:scaleX(0.829);width:119.4px;overflow:hidden;">CPC</div>
<div class="t" style="left:755px;top:434px;transform:scaleX(0.955);width:130.9px;overflow:hidden;">Cost Per Copy</div>
<div class="t" style="left:885px;top:434px;transform:scaleX(0.929);width:111.9px;overflow:hidden;">HOP001</div>
<div class="t" style="left:994px;top:434px;transform:scaleX(0.978);width:123.7px;overflow:hidden;">Hope Works (Pty) Ltd</div>
<div class="t" style="left:1199px;top:434px;transform:scaleX(1.011);width:79.1px;overflow:hidden;">23/05/2017</div>
<div class="t" style="left:1284px;top:434px;transform:scaleX(1.011);width:73.2px;overflow:hidden;">23/05/2022</div>
<div class="cb" style="left:49px;top:454px"></div>
<div class="hl" style="left:5px;top:471px;width:1373px"></div>
<div class="t" style="left:291px;top:455px;transform:scaleX(0.949);width:92.7px;overflow:hidden;">CO0000044</div>
<div class="t" style="left:384px;top:455px;transform:scaleX(0.994);width:85.5px;overflow:hidden;">2020-878787</div>
<div class="t" style="left:651px;top:455px;transform:scaleX(0.829);width:119.4px;overflow:hidden;">CPC</div>
<div class="t" style="left:755px;top:455px;transform:scaleX(0.955);width:130.9px;overflow:hidden;">Cost Per Copy</div>
<div class="t" style="left:885px;top:455px;transform:scaleX(0.929);width:111.9px;overflow:hidden;">BOT0001</div>
<div class="t" style="left:994px;top:455px;transform:scaleX(0.962);width:125.7px;overflow:hidden;">Bothas Networking inc</div>
<div class="t" style="left:1199px;top:455px;transform:scaleX(1.011);width:79.1px;overflow:hidden;">25/10/2016</div>
<div class="t" style="left:1284px;top:455px;transform:scaleX(1.011);width:73.2px;overflow:hidden;">25/10/2021</div>
<div class="cb" style="left:49px;top:475px"></div>
<div class="hl" style="left:5px;top:492px;width:1373px"></div>
<div class="t" style="left:291px;top:476px;transform:scaleX(0.949);width:92.7px;overflow:hidden;">CO0000044</div>
<div class="t" style="left:474px;top:476px;transform:scaleX(0.950);width:181.1px;overflow:hidden;">Bothas Shop</div>
<div class="t" style="left:651px;top:476px;transform:scaleX(0.829);width:119.4px;overflow:hidden;">CPC</div>
<div class="t" style="left:755px;top:476px;transform:scaleX(0.955);width:130.9px;overflow:hidden;">Cost Per Copy</div>
<div class="t" style="left:885px;top:476px;transform:scaleX(0.929);width:111.9px;overflow:hidden;">BOT0001</div>
<div class="t" style="left:994px;top:476px;transform:scaleX(0.962);width:125.7px;overflow:hidden;">Bothas Networking inc</div>
<div class="t" style="left:1199px;top:476px;transform:scaleX(1.011);width:79.1px;overflow:hidden;">25/10/2016</div>
<div class="t" style="left:1284px;top:476px;transform:scaleX(1.011);width:73.2px;overflow:hidden;">25/10/2021</div>
<div class="cb" style="left:49px;top:496px"></div>
<div class="hl" style="left:5px;top:513px;width:1373px"></div>
<div class="t" style="left:291px;top:497px;transform:scaleX(0.949);width:92.7px;overflow:hidden;">CO0000043</div>
<div class="t" style="left:384px;top:497px;transform:scaleX(0.994);width:85.5px;overflow:hidden;">2020-103053</div>
<div class="t" style="left:651px;top:497px;transform:scaleX(0.829);width:119.4px;overflow:hidden;">CPC</div>
<div class="t" style="left:755px;top:497px;transform:scaleX(0.955);width:130.9px;overflow:hidden;">Cost Per Copy</div>
<div class="t" style="left:885px;top:497px;transform:scaleX(0.929);width:111.9px;overflow:hidden;">HOP001</div>
<div class="t" style="left:994px;top:497px;transform:scaleX(0.978);width:123.7px;overflow:hidden;">Hope Works (Pty) Ltd</div>
<div class="t" style="left:1199px;top:497px;transform:scaleX(1.011);width:79.1px;overflow:hidden;">01/08/2016</div>
<div class="t" style="left:1284px;top:497px;transform:scaleX(1.011);width:73.2px;overflow:hidden;">07/09/2021</div>
<div class="cb" style="left:49px;top:517px"></div>
<div class="hl" style="left:5px;top:534px;width:1373px"></div>
<div class="t" style="left:291px;top:518px;transform:scaleX(0.949);width:92.7px;overflow:hidden;">CO0000043</div>
<div class="t" style="left:384px;top:518px;transform:scaleX(0.994);width:85.5px;overflow:hidden;">2020-102041</div>
<div class="t" style="left:651px;top:518px;transform:scaleX(0.829);width:119.4px;overflow:hidden;">CPC</div>
<div class="t" style="left:755px;top:518px;transform:scaleX(0.955);width:130.9px;overflow:hidden;">Cost Per Copy</div>
<div class="t" style="left:885px;top:518px;transform:scaleX(0.929);width:111.9px;overflow:hidden;">HOP001</div>
<div class="t" style="left:994px;top:518px;transform:scaleX(0.978);width:123.7px;overflow:hidden;">Hope Works (Pty) Ltd</div>
<div class="t" style="left:1199px;top:518px;transform:scaleX(1.011);width:79.1px;overflow:hidden;">01/08/2016</div>
<div class="t" style="left:1284px;top:518px;transform:scaleX(1.011);width:73.2px;overflow:hidden;">07/09/2021</div>
<div class="cb" style="left:49px;top:538px"></div>
<div class="hl" style="left:5px;top:555px;width:1373px"></div>
<div class="t" style="left:291px;top:539px;transform:scaleX(0.949);width:92.7px;overflow:hidden;">CO0000043</div>
<div class="t" style="left:384px;top:539px;transform:scaleX(0.970);width:87.6px;overflow:hidden;">nm10301</div>
<div class="t" style="left:651px;top:539px;transform:scaleX(0.829);width:119.4px;overflow:hidden;">CPC</div>
<div class="t" style="left:755px;top:539px;transform:scaleX(0.955);width:130.9px;overflow:hidden;">Cost Per Copy</div>
<div class="t" style="left:885px;top:539px;transform:scaleX(0.929);width:111.9px;overflow:hidden;">HOP001</div>
<div class="t" style="left:994px;top:539px;transform:scaleX(0.978);width:123.7px;overflow:hidden;">Hope Works (Pty) Ltd</div>
<div class="t" style="left:1199px;top:539px;transform:scaleX(1.011);width:79.1px;overflow:hidden;">01/08/2016</div>
<div class="t" style="left:1284px;top:539px;transform:scaleX(1.011);width:73.2px;overflow:hidden;">07/09/2021</div>
<div class="cb" style="left:49px;top:559px"></div>
<div class="hl" style="left:5px;top:576px;width:1373px"></div>
<div class="t" style="left:291px;top:560px;transform:scaleX(0.949);width:92.7px;overflow:hidden;">CO0000042</div>
<div class="t" style="left:384px;top:560px;transform:scaleX(0.996);width:85.3px;overflow:hidden;">204-989898</div>
<div class="t" style="left:651px;top:560px;transform:scaleX(0.829);width:119.4px;overflow:hidden;">CPC</div>
<div class="t" style="left:755px;top:560px;transform:scaleX(0.955);width:130.9px;overflow:hidden;">Cost Per Copy</div>
<div class="t" style="left:885px;top:560px;transform:scaleX(0.929);width:111.9px;overflow:hidden;">HOP001</div>
<div class="t" style="left:994px;top:560px;transform:scaleX(0.978);width:123.7px;overflow:hidden;">Hope Works (Pty) Ltd</div>
<div class="t" style="left:1199px;top:560px;transform:scaleX(1.010);width:79.2px;overflow:hidden;">07/09/2016</div>
<div class="t" style="left:1284px;top:560px;transform:scaleX(1.016);width:72.9px;overflow:hidden;">07/09/2022</div>
<div class="cb" style="left:49px;top:580px"></div>
<div class="hl" style="left:5px;top:597px;width:1373px"></div>
<div class="t" style="left:291px;top:581px;transform:scaleX(0.949);width:92.7px;overflow:hidden;">CO0000041</div>
<div class="t" style="left:384px;top:581px;transform:scaleX(0.994);width:85.5px;overflow:hidden;">2020-103050</div>
<div class="t" style="left:651px;top:581px;transform:scaleX(0.829);width:119.4px;overflow:hidden;">CPC</div>
<div class="t" style="left:755px;top:581px;transform:scaleX(0.955);width:130.9px;overflow:hidden;">Cost Per Copy</div>
<div class="t" style="left:885px;top:581px;transform:scaleX(0.922);width:112.8px;overflow:hidden;">PAN001</div>
<div class="t" style="left:994px;top:581px;transform:scaleX(0.939);width:128.9px;overflow:hidden;">Panda Copiers</div>
<div class="t" style="left:1199px;top:581px;transform:scaleX(1.011);width:79.1px;overflow:hidden;">05/07/2016</div>
<div class="t" style="left:1284px;top:581px;transform:scaleX(1.011);width:73.2px;overflow:hidden;">05/07/2021</div>
<div class="cb" style="left:49px;top:601px"></div>
<div class="hl" style="left:5px;top:618px;width:1373px"></div>
<div class="t" style="left:291px;top:602px;transform:scaleX(0.949);width:92.7px;overflow:hidden;">CO0000031</div>
<div class="t" style="left:384px;top:602px;transform:scaleX(0.941);width:90.3px;overflow:hidden;">320AREG000205</div>
<div class="t" style="left:651px;top:602px;transform:scaleX(0.829);width:119.4px;overflow:hidden;">CPC</div>
<div class="t" style="left:755px;top:602px;transform:scaleX(0.955);width:130.9px;overflow:hidden;">Cost Per Copy</div>
<div class="t" style="left:885px;top:602px;transform:scaleX(0.923);width:112.7px;overflow:hidden;">YES001</div>
<div class="t" style="left:994px;top:602px;transform:scaleX(0.950);width:127.4px;overflow:hidden;">Young Electric</div>
<div class="t" style="left:1199px;top:602px;transform:scaleX(1.011);width:79.1px;overflow:hidden;">24/03/2016</div>
<div class="t" style="left:1284px;top:602px;transform:scaleX(1.011);width:73.2px;overflow:hidden;">24/03/2021</div>
<div class="cb" style="left:49px;top:622px"></div>
<div class="hl" style="left:5px;top:639px;width:1373px"></div>
<div class="t" style="left:291px;top:623px;transform:scaleX(0.949);width:92.7px;overflow:hidden;">CO0000031</div>
<div class="t" style="left:384px;top:623px;transform:scaleX(0.977);width:87.0px;overflow:hidden;">107</div>
<div class="t" style="left:651px;top:623px;transform:scaleX(0.829);width:119.4px;overflow:hidden;">CPC</div>
<div class="t" style="left:755px;top:623px;transform:scaleX(0.955);width:130.9px;overflow:hidden;">Cost Per Copy</div>
<div class="t" style="left:885px;top:623px;transform:scaleX(0.923);width:112.7px;overflow:hidden;">YES001</div>
<div class="t" style="left:994px;top:623px;transform:scaleX(0.950);width:127.4px;overflow:hidden;">Young Electric</div>
<div class="t" style="left:1199px;top:623px;transform:scaleX(1.011);width:79.1px;overflow:hidden;">24/03/2016</div>
<div class="t" style="left:1284px;top:623px;transform:scaleX(1.011);width:73.2px;overflow:hidden;">24/03/2021</div>
<div class="cb" style="left:49px;top:643px"></div>
<div class="hl" style="left:5px;top:660px;width:1373px"></div>
<div class="t" style="left:291px;top:644px;transform:scaleX(0.949);width:92.7px;overflow:hidden;">CO0000028</div>
<div class="t" style="left:384px;top:644px;transform:scaleX(0.977);width:87.0px;overflow:hidden;">147807</div>
<div class="t" style="left:651px;top:644px;transform:scaleX(0.829);width:119.4px;overflow:hidden;">CPC</div>
<div class="t" style="left:755px;top:644px;transform:scaleX(0.955);width:130.9px;overflow:hidden;">Cost Per Copy</div>
<div class="t" style="left:885px;top:644px;transform:scaleX(0.922);width:112.8px;overflow:hidden;">HAC001</div>
<div class="t" style="left:994px;top:644px;transform:scaleX(0.937);width:129.1px;overflow:hidden;">Hack PC - IT Shop</div>
<div class="t" style="left:1199px;top:644px;transform:scaleX(1.011);width:79.1px;overflow:hidden;">29/06/2015</div>
<div class="t" style="left:1284px;top:644px;transform:scaleX(1.011);width:73.2px;overflow:hidden;">29/06/2020</div>
<div class="cb" style="left:49px;top:664px"></div>
<div class="hl" style="left:5px;top:681px;width:1373px"></div>
<div class="t" style="left:291px;top:665px;transform:scaleX(0.949);width:92.7px;overflow:hidden;">CO0000028</div>
<div class="t" style="left:384px;top:665px;transform:scaleX(0.977);width:87.0px;overflow:hidden;">147708</div>
<div class="t" style="left:651px;top:665px;transform:scaleX(0.829);width:119.4px;overflow:hidden;">CPC</div>
<div class="t" style="left:755px;top:665px;transform:scaleX(0.955);width:130.9px;overflow:hidden;">Cost Per Copy</div>
<div class="t" style="left:885px;top:665px;transform:scaleX(0.922);width:112.8px;overflow:hidden;">HAC001</div>
<div class="t" style="left:994px;top:665px;transform:scaleX(0.937);width:129.1px;overflow:hidden;">Hack PC - IT Shop</div>
<div class="t" style="left:1199px;top:665px;transform:scaleX(1.011);width:79.1px;overflow:hidden;">29/06/2015</div>
<div class="t" style="left:1284px;top:665px;transform:scaleX(1.011);width:73.2px;overflow:hidden;">29/06/2020</div>
<div class="cb" style="left:49px;top:685px"></div>
<div class="hl" style="left:5px;top:702px;width:1373px"></div>
<div class="t" style="left:291px;top:686px;transform:scaleX(0.949);width:92.7px;overflow:hidden;">CO0000019</div>
<div class="t" style="left:474px;top:686px;transform:scaleX(0.965);width:178.2px;overflow:hidden;">Stone Castle Shopping Centre</div>
<div class="t" style="left:651px;top:686px;transform:scaleX(0.829);width:119.4px;overflow:hidden;">CPC</div>
<div class="t" style="left:755px;top:686px;transform:scaleX(0.955);width:130.9px;overflow:hidden;">Cost Per Copy</div>
<div class="t" style="left:885px;top:686px;transform:scaleX(0.942);width:110.4px;overflow:hidden;">OFF001</div>
<div class="t" style="left:994px;top:686px;transform:scaleX(0.948);width:127.6px;overflow:hidden;">Office Supplies Unlimited</div>
<div class="t" style="left:1199px;top:686px;transform:scaleX(1.011);width:79.1px;overflow:hidden;">28/07/2014</div>
<div class="t" style="left:1284px;top:686px;transform:scaleX(1.011);width:73.2px;overflow:hidden;">28/07/2019</div>
<div class="cb" style="left:49px;top:706px"></div>
<div class="hl" style="left:5px;top:723px;width:1373px"></div>
<div class="t" style="left:291px;top:707px;transform:scaleX(0.949);width:92.7px;overflow:hidden;">CO0000019</div>
<div class="t" style="left:384px;top:707px;transform:scaleX(0.996);width:85.3px;overflow:hidden;">2020-10204</div>
<div class="t" style="left:651px;top:707px;transform:scaleX(0.829);width:119.4px;overflow:hidden;">CPC</div>
<div class="t" style="left:755px;top:707px;transform:scaleX(0.955);width:130.9px;overflow:hidden;">Cost Per Copy</div>
<div class="t" style="left:885px;top:707px;transform:scaleX(0.942);width:110.4px;overflow:hidden;">OFF001</div>
<div class="t" style="left:994px;top:707px;transform:scaleX(0.948);width:127.6px;overflow:hidden;">Office Supplies Unlimited</div>
<div class="t" style="left:1199px;top:707px;transform:scaleX(1.011);width:79.1px;overflow:hidden;">28/07/2014</div>
<div class="t" style="left:1284px;top:707px;transform:scaleX(1.011);width:73.2px;overflow:hidden;">28/07/2019</div>
<div class="cb" style="left:49px;top:727px"></div>
<div class="hl" style="left:5px;top:744px;width:1373px"></div>
<div class="t" style="left:291px;top:728px;transform:scaleX(0.949);width:92.7px;overflow:hidden;">CO0000018</div>
<div class="t" style="left:384px;top:728px;transform:scaleX(0.994);width:85.5px;overflow:hidden;">1912-102031</div>
<div class="t" style="left:651px;top:728px;transform:scaleX(0.829);width:119.4px;overflow:hidden;">CPC</div>
<div class="t" style="left:755px;top:728px;transform:scaleX(0.955);width:130.9px;overflow:hidden;">Cost Per Copy</div>
<div class="t" style="left:885px;top:728px;transform:scaleX(0.921);width:112.9px;overflow:hidden;">SAM001</div>
<div class="t" style="left:994px;top:728px;transform:scaleX(0.941);width:128.6px;overflow:hidden;">Samanthas Diner</div>
<div class="t" style="left:1199px;top:728px;transform:scaleX(1.011);width:79.1px;overflow:hidden;">09/07/2014</div>
<div class="t" style="left:1284px;top:728px;transform:scaleX(1.011);width:73.2px;overflow:hidden;">09/07/2019</div>
<div class="cb" style="left:49px;top:748px"></div>
<div class="hl" style="left:5px;top:765px;width:1373px"></div>
<div class="t" style="left:291px;top:749px;transform:scaleX(0.949);width:92.7px;overflow:hidden;">CO0000018</div>
<div class="t" style="left:384px;top:749px;transform:scaleX(1.014);width:83.8px;overflow:hidden;">19-12/1202</div>
<div class="t" style="left:651px;top:749px;transform:scaleX(0.829);width:119.4px;overflow:hidden;">CPC</div>
<div class="t" style="left:755px;top:749px;transform:scaleX(0.955);width:130.9px;overflow:hidden;">Cost Per Copy</div>
<div class="t" style="left:885px;top:749px;transform:scaleX(0.921);width:112.9px;overflow:hidden;">SAM001</div>
<div class="t" style="left:994px;top:749px;transform:scaleX(0.941);width:128.6px;overflow:hidden;">Samanthas Diner</div>
<div class="t" style="left:1199px;top:749px;transform:scaleX(1.011);width:79.1px;overflow:hidden;">09/07/2014</div>
<div class="t" style="left:1284px;top:749px;transform:scaleX(1.011);width:73.2px;overflow:hidden;">09/07/2019</div>
<div class="cb" style="left:49px;top:769px"></div>
<div class="hl" style="left:5px;top:786px;width:1373px"></div>
<div class="t" style="left:291px;top:770px;transform:scaleX(0.949);width:92.7px;overflow:hidden;">CO0000018</div>
<div class="t" style="left:384px;top:770px;transform:scaleX(0.999);width:85.1px;overflow:hidden;">20-147258</div>
<div class="t" style="left:651px;top:770px;transform:scaleX(0.829);width:119.4px;overflow:hidden;">CPC</div>
<div class="t" style="left:755px;top:770px;transform:scaleX(0.955);width:130.9px;overflow:hidden;">Cost Per Copy</div>
<div class="t" style="left:885px;top:770px;transform:scaleX(0.921);width:112.9px;overflow:hidden;">SAM001</div>
<div class="t" style="left:994px;top:770px;transform:scaleX(0.941);width:128.6px;overflow:hidden;">Samanthas Diner</div>
<div class="t" style="left:1199px;top:770px;transform:scaleX(1.011);width:79.1px;overflow:hidden;">09/07/2014</div>
<div class="t" style="left:1284px;top:770px;transform:scaleX(1.011);width:73.2px;overflow:hidden;">09/07/2019</div>
<div class="cb" style="left:49px;top:790px"></div>
<div class="hl" style="left:5px;top:807px;width:1373px"></div>
<div class="t" style="left:291px;top:791px;transform:scaleX(0.949);width:92.7px;overflow:hidden;">CO0000016</div>
<div class="t" style="left:384px;top:791px;transform:scaleX(0.973);width:87.4px;overflow:hidden;">SP19-12185274</div>
<div class="t" style="left:651px;top:791px;transform:scaleX(0.829);width:119.4px;overflow:hidden;">CPC</div>
<div class="t" style="left:755px;top:791px;transform:scaleX(0.955);width:130.9px;overflow:hidden;">Cost Per Copy</div>
<div class="t" style="left:885px;top:791px;transform:scaleX(0.929);width:111.9px;overflow:hidden;">TIA001</div>
<div class="t" style="left:994px;top:791px;transform:scaleX(0.966);width:125.3px;overflow:hidden;">Titan Group</div>
<div class="t" style="left:1199px;top:791px;transform:scaleX(1.011);width:79.1px;overflow:hidden;">13/06/2014</div>
<div class="t" style="left:1284px;top:791px;transform:scaleX(1.011);width:73.2px;overflow:hidden;">13/06/2019</div>
<div class="cb" style="left:49px;top:811px"></div>
<div class="hl" style="left:5px;top:828px;width:1373px"></div>
<div class="t" style="left:291px;top:812px;transform:scaleX(0.949);width:92.7px;overflow:hidden;">CO0000012</div>
<div class="t" style="left:474px;top:812px;transform:scaleX(0.960);width:179.2px;overflow:hidden;">South Riding Centre - First Floor LB</div>
<div class="t" style="left:651px;top:812px;transform:scaleX(0.829);width:119.4px;overflow:hidden;">CPC</div>
<div class="t" style="left:755px;top:812px;transform:scaleX(0.955);width:130.9px;overflow:hidden;">Cost Per Copy</div>
<div class="t" style="left:885px;top:812px;transform:scaleX(0.929);width:111.9px;overflow:hidden;">TIA001</div>
<div class="t" style="left:994px;top:812px;transform:scaleX(0.966);width:125.3px;overflow:hidden;">Titan Group</div>
<div class="t" style="left:1199px;top:812px;transform:scaleX(1.011);width:79.1px;overflow:hidden;">16/05/2014</div>
<div class="t" style="left:1284px;top:812px;transform:scaleX(1.011);width:73.2px;overflow:hidden;">16/05/2019</div>
<div class="vlg" style="left:20px;top:220px;height:611px"></div>
<div class="vlg" style="left:90px;top:220px;height:611px"></div>
<div class="vlg" style="left:286px;top:220px;height:611px"></div>
<div class="vlg" style="left:379px;top:220px;height:611px"></div>
<div class="vlg" style="left:469px;top:220px;height:611px"></div>
<div class="vlg" style="left:646px;top:220px;height:611px"></div>
<div class="vlg" style="left:750px;top:220px;height:611px"></div>
<div class="vlg" style="left:880px;top:220px;height:611px"></div>
<div class="vlg" style="left:989px;top:220px;height:611px"></div>
<div class="vlg" style="left:1115px;top:220px;height:611px"></div>
<div class="vlg" style="left:1194px;top:220px;height:611px"></div>
<div class="vlg" style="left:1279px;top:220px;height:611px"></div>
<div class="vlg" style="left:1358px;top:220px;height:611px"></div>
<!-- vertical scrollbar -->
<div style="left:1378px;top:196px;width:17px;height:635px;background:#f4f4f6"></div>
<div style="left:1383px;top:202px;width:0;height:0;border-left:3.5px solid transparent;border-right:3.5px solid transparent;border-bottom:4px solid #777983"></div>
<div style="left:1383px;top:213px;width:7px;height:396px;border:1px solid #9fa1a9;border-radius:3.5px;background:linear-gradient(90deg,#ebebee,#d5d6db)"></div>
<div style="left:1383px;top:821px;width:0;height:0;border-left:3.5px solid transparent;border-right:3.5px solid transparent;border-top:4px solid #777983"></div>
<!-- horizontal scrollbar -->
<div style="left:5px;top:831px;width:1373px;height:16px;background:#f4f4f6"></div>
<div style="left:1378px;top:831px;width:17px;height:16px;background:#e9e9ed"></div>
<div style="left:11px;top:836px;width:0;height:0;border-top:3.5px solid transparent;border-bottom:3.5px solid transparent;border-right:4px solid #777983"></div>
<div style="left:22px;top:836px;width:484px;height:7px;border:1px solid #9fa1a9;border-radius:3.5px;background:linear-gradient(#ebebee,#d5d6db)"></div>
<div style="left:1368px;top:836px;width:0;height:0;border-top:3.5px solid transparent;border-bottom:3.5px solid transparent;border-left:4px solid #777983"></div>
<!-- dialog -->
<div style="left:609px;top:436px;width:295px;height:133px;border:1px solid #6a6a6a;background:#fff;box-shadow:0 2px 10px rgba(0,0,0,0.35)"></div>
<div style="left:610px;top:526px;width:293px;height:41px;background:#f0f0f0"></div>
<div style="left:618px;top:445px;font:12px/14px 'Liberation Sans';color:#111;white-space:nowrap;transform:scaleX(0.96)">Buy Back</div>
<svg style="left:882px;top:445px" width="12" height="12"><path d="M1 1 L11 11 M11 1 L1 11" stroke="#9a9a9a" stroke-width="1"/></svg>
<div style="left:621px;top:490px;font:12px/14px 'Liberation Sans';color:#111;white-space:nowrap;transform:scaleX(0.972)">Do you want to buy back items on this contract?</div>
<div style="left:731px;top:536px;width:73px;height:21px;border:2px solid #0078d7;background:#e1e1e1"></div>
<div style="left:731px;top:540px;width:73px;font:12px/14px 'Liberation Sans';color:#111;text-align:center;transform:scaleX(0.85);transform-origin:50% 0">Yes</div>
<div style="left:814px;top:536px;width:73px;height:21px;border:1px solid #adadad;background:#e1e1e1"></div>
<div style="left:814px;top:540px;width:73px;font:12px/14px 'Liberation Sans';color:#111;text-align:center;transform:scaleX(0.92);transform-origin:50% 0">No</div>

</body></html>
